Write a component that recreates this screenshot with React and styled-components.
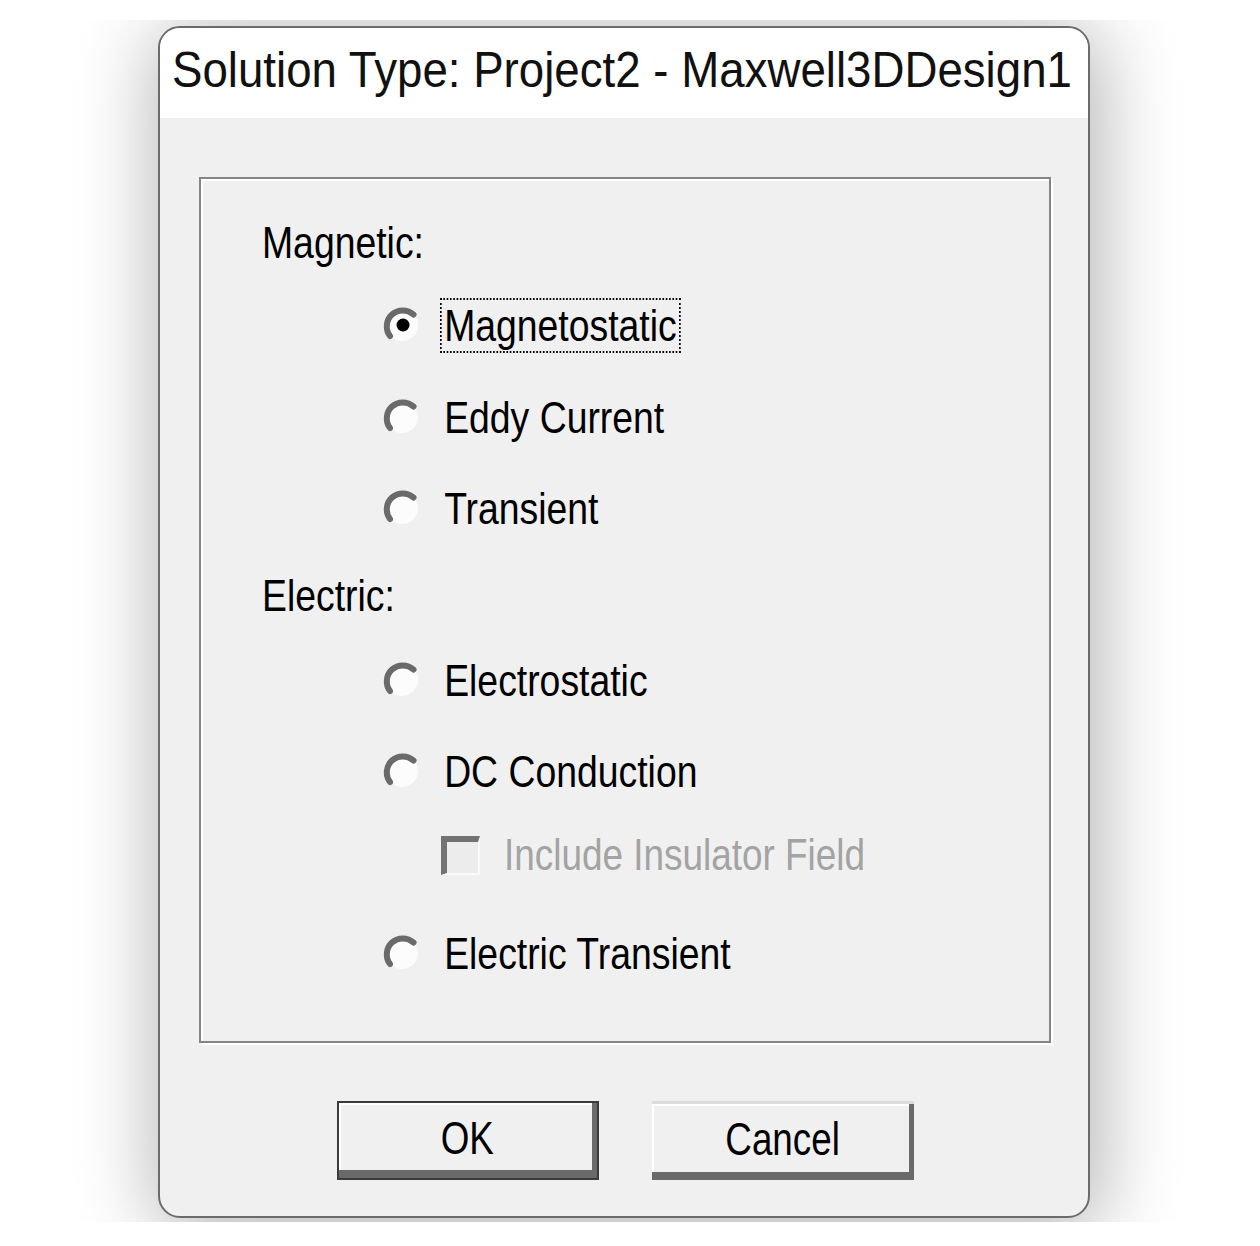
import React from 'react'
import styled, { createGlobalStyle } from 'styled-components'

const GlobalStyle = createGlobalStyle`
  body {
    margin: 0;
    background: #fff;
  }
`

const sections = [
  {
    title: 'Magnetic:',
    top: 34,
    options: [
      { label: 'Magnetostatic', checked: true, gap: 22 },
      { label: 'Eddy Current', gap: 32 },
      { label: 'Transient', gap: 31 },
    ],
  },
  {
    title: 'Electric:',
    top: 28,
    options: [
      { label: 'Electrostatic', gap: 24 },
      { label: 'DC Conduction', gap: 31 },
      { check: 'Include Insulator Field', gap: 24 },
      { label: 'Electric Transient', gap: 38 },
    ],
  },
]

const Radio = ({ checked }) => (
  <RadioBox>
    <svg width="38" height="38" viewBox="0 0 38 38">
      <circle cx="19" cy="19" r="16" fill="#fcfcfc" />
      <path
        d="M30.5 8.5 A16 16 0 0 0 7 30"
        fill="none"
        stroke="#6a6a6a"
        strokeWidth="6"
        strokeLinecap="round"
      />
      {checked && <circle cx="20" cy="19" r="6.5" fill="#000" />}
    </svg>
  </RadioBox>
)

const App = () => {
  return (
    <>
      <GlobalStyle />
      <Page>
        <Backdrop>
          <Dialog>
            <TitleBar>
              <TitleText>Solution Type: Project2 - Maxwell3DDesign1</TitleText>
            </TitleBar>
            <Body>
              <GroupBox>
                {sections.map((s, i) => (
                  <React.Fragment key={s.title}>
                    <Row $gap={i === 0 ? 0 : s.top}>
                      <Narrow>{s.title}</Narrow>
                    </Row>
                    {s.options.map((o) =>
                      o.check ? (
                        <Row key={o.check} $gap={o.gap}>
                          <CheckRow>
                            <CheckBox />
                            <DisabledText>{o.check}</DisabledText>
                          </CheckRow>
                        </Row>
                      ) : (
                        <Row key={o.label} $gap={o.gap}>
                          <OptionRow>
                            <Radio checked={o.checked} />
                            <OptionLabel $focused={o.checked}>{o.label}</OptionLabel>
                          </OptionRow>
                        </Row>
                      )
                    )}
                  </React.Fragment>
                ))}
              </GroupBox>
              <Buttons>
                <Button $default>
                  <ButtonText>OK</ButtonText>
                </Button>
                <Button>
                  <ButtonText>Cancel</ButtonText>
                </Button>
              </Buttons>
            </Body>
          </Dialog>
        </Backdrop>
      </Page>
    </>
  )
}

export default App

const Page = styled.div`
  padding: 20px 0 0 62px;
`

const Backdrop = styled.div`
  width: 1133px;
  height: 1202px;
  box-sizing: border-box;
  overflow: hidden;
  padding: 6px 0 0 96px;
  background: #fff;
`

const Dialog = styled.div`
  width: 932px;
  height: 1192px;
  box-sizing: border-box;
  border: 2px solid #6b6b6b;
  border-radius: 22px;
  overflow: hidden;
  display: flex;
  flex-direction: column;
  background: #f0f0f0;
  box-shadow: 4px 8px 80px 6px rgba(0, 0, 0, 0.3);
`

const TitleBar = styled.div`
  height: 90px;
  flex: none;
  background: #fff;
  display: flex;
  align-items: center;
  padding: 0 0 7px 12px;
  box-sizing: border-box;
  white-space: nowrap;
`

const TitleText = styled.span`
  display: inline-block;
  font-family: 'Liberation Sans', Arial, sans-serif;
  font-size: 50px;
  color: #111;
  transform: scaleX(0.913);
  transform-origin: left center;
`

const Body = styled.div`
  flex: 1;
  display: flex;
  flex-direction: column;
  padding: 59px 0 0 39px;
`

const GroupBox = styled.div`
  width: 852px;
  height: 866px;
  box-sizing: border-box;
  border: 2px solid #858585;
  box-shadow: inset 2px 2px 0 #fff, 2px 2px 0 #fff;
  padding: 34px 0 0 61px;
  display: flex;
  flex-direction: column;
`

const Row = styled.div`
  height: 60px;
  margin-top: ${(p) => p.$gap}px;
  display: flex;
  align-items: center;
  font-family: 'Liberation Sans', Arial, sans-serif;
  font-size: 45px;
  color: #000;
  white-space: nowrap;
`

const Narrow = styled.span`
  display: inline-block;
  line-height: 60px;
  transform: scaleX(0.83);
  transform-origin: left center;
`

const OptionRow = styled.div`
  margin-left: 121px;
  display: flex;
  align-items: center;
`

const RadioBox = styled.span`
  width: 38px;
  height: 38px;
  display: flex;
`

const OptionLabel = styled.span`
  display: inline-block;
  margin-left: 19px;
  padding: 0 3px;
  line-height: 51px;
  border: 2px dotted ${(p) => (p.$focused ? '#000' : 'transparent')};
  transform: scaleX(0.83);
  transform-origin: left center;
`

const CheckRow = styled.div`
  margin-left: 179px;
  display: flex;
  align-items: center;
`

const CheckBox = styled.span`
  width: 39px;
  height: 39px;
  box-sizing: border-box;
  border-top: 6px solid #727272;
  border-left: 6px solid #727272;
  border-right: 2px solid #fafafa;
  border-bottom: 2px solid #fafafa;
  background: #ececec;
`

const DisabledText = styled.span`
  display: inline-block;
  margin-left: 24px;
  color: #a3a3a3;
  line-height: 60px;
  transform: scaleX(0.82);
  transform-origin: left center;
`

const Buttons = styled.div`
  width: 852px;
  margin-top: 58px;
  display: flex;
  justify-content: center;
  gap: 53px;
`

const Button = styled.div`
  width: 262px;
  height: 79px;
  box-sizing: border-box;
  display: flex;
  align-items: center;
  justify-content: center;
  padding-bottom: 6px;
  background: #f0f0f0;
  border-style: solid;
  border-width: ${(p) => (p.$default ? '2px' : '3px 0 0 0')};
  border-color: ${(p) => (p.$default ? '#3a3a3a' : '#dcdcdc')};
  box-shadow: inset -5px -8px 0 #6a6a6a, inset 2px 2px 0 #fff;
`

const ButtonText = styled.span`
  display: inline-block;
  font-family: 'Liberation Sans', Arial, sans-serif;
  font-size: 46px;
  color: #000;
  transform: scaleX(0.8);
`
